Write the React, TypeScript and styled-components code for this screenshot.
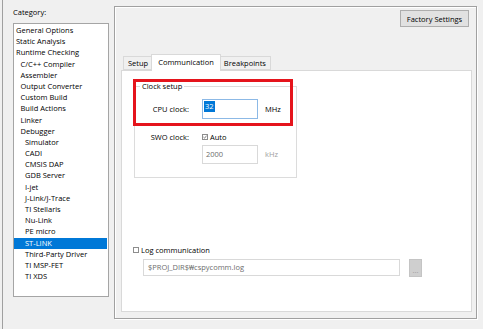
import styled, { createGlobalStyle } from 'styled-components';

const FONT = `'Open Sans', 'Noto Sans', 'Liberation Sans', sans-serif`;

const GlobalStyle = createGlobalStyle`
  html, body {
    margin: 0;
    padding: 0;
    background: #f0f0f0;
  }
`;

const Window = styled.div`
  display: flex;
  width: 483px;
  height: 329px;
  overflow: hidden;
  background: #f0f0f0;
  font-family: ${FONT};
  font-size: 7.5px;
  color: #000;
`;

const Sidebar = styled.div`
  box-sizing: border-box;
  width: 112px;
  margin-left: 2px;
  padding: 6px 0 0 10px;
  border-left: 1px solid #a0a0a0;
`;

const CategoryLabel = styled.div`
  height: 12px;
  line-height: 12px;
  margin-bottom: 5px;
`;

const CategoryList = styled.ul`
  box-sizing: border-box;
  width: 96px;
  height: 274px;
  margin: 0;
  padding: 1px 1px 0 0;
  list-style: none;
  background: #fff;
  border: 1px solid #a5a5a5;
`;

const CategoryItem = styled.li<{ $level: number; $selected?: boolean }>`
  height: 11.2px;
  line-height: 11.2px;
  padding-left: ${({ $level }) => 2 + $level * 4.5}px;
  white-space: nowrap;
  background: ${({ $selected }) => ($selected ? '#0078d7' : 'transparent')};
  color: ${({ $selected }) => ($selected ? '#fff' : '#000')};
`;

const SettingsPanel = styled.div`
  box-sizing: border-box;
  display: flex;
  flex-direction: column;
  width: 363px;
  height: 313px;
  margin-top: 6px;
  padding: 3px 4px 6px 6px;
  border: 1px solid #a0a0a0;
  box-shadow: inset 1px 1px 0 #fff, 1px 1px 0 #fff;
`;

const FactoryButton = styled.button`
  align-self: flex-end;
  box-sizing: border-box;
  width: 69px;
  height: 17px;
  margin: 0 3px 0 0;
  padding: 0;
  font-family: ${FONT};
  font-size: 7.5px;
  color: #000;
  background: #e1e1e1;
  border: 1px solid #adadad;
`;

const TabStrip = styled.div`
  display: flex;
  align-items: flex-end;
  height: 16px;
  margin-top: 27px;
  padding-left: 2px;
`;

const Tab = styled.div<{ $active?: boolean }>`
  position: relative;
  box-sizing: border-box;
  height: ${({ $active }) => ($active ? 17 : 14)}px;
  margin: ${({ $active }) => ($active ? '0 -2px -1px' : '0')};
  padding: ${({ $active }) => ($active ? '0 6px' : '0 4px')};
  line-height: ${({ $active }) => ($active ? 14 : 13)}px;
  background: ${({ $active }) => ($active ? '#fff' : '#f0f0f0')};
  border: 1px solid #d9d9d9;
  border-bottom: ${({ $active }) => ($active ? 'none' : '1px solid #d9d9d9')};
  z-index: ${({ $active }) => ($active ? 1 : 0)};
  white-space: nowrap;
`;

const TabBody = styled.div`
  position: relative;
  flex: 1;
  background: #fff;
  border: 1px solid #d9d9d9;
`;

const Annotation = styled.div`
  position: absolute;
  left: 11px;
  top: 8px;
  width: 160px;
  height: 47px;
  box-sizing: border-box;
  border: 3px solid #e5141c;
  pointer-events: none;
`;

const GroupBox = styled.fieldset`
  box-sizing: border-box;
  width: 163px;
  height: 98px;
  margin: 9px 0 0 12px;
  padding: 0;
  border: 1px solid #dcdcdc;
`;

const GroupLegend = styled.legend`
  margin-left: 5px;
  padding: 0 2px;
  line-height: 12px;
`;

const ClockGrid = styled.div`
  display: grid;
  grid-template-columns: 54px 56px auto;
  grid-template-rows: 20px 24px 21px;
  column-gap: 13px;
  align-items: end;
  padding-top: 7px;
`;

const FieldLabel = styled.span<{ $center?: boolean }>`
  justify-self: end;
  align-self: ${({ $center }) => ($center ? 'center' : 'end')};
  line-height: 12px;
  white-space: nowrap;
`;

const TextBox = styled.div<{ $focused?: boolean; $disabled?: boolean }>`
  box-sizing: border-box;
  height: ${({ $focused }) => ($focused ? 20 : 19)}px;
  padding: ${({ $focused }) => ($focused ? '1px 1px 0 3px' : '0 1px 0 3px')};
  background: #fff;
  border: 1px solid ${({ $focused }) => ($focused ? '#8cb9e6' : '#d9d9d9')};
  color: ${({ $disabled }) => ($disabled ? '#6d6d6d' : '#000')};
  line-height: ${({ $focused }) => ($focused ? 11 : 17)}px;
  white-space: nowrap;
  overflow: hidden;
`;

const Selection = styled.span`
  display: inline-block;
  margin-left: -2px;
  padding: 0 1px;
  background: #0078d7;
  color: #fff;
`;

const Unit = styled.span<{ $disabled?: boolean }>`
  margin-left: -6px;
  align-self: center;
  color: ${({ $disabled }) => ($disabled ? '#a0a0a0' : '#000')};
`;

const CheckRow = styled.label`
  display: flex;
  align-items: center;
  gap: 2px;
  height: 12px;
  white-space: nowrap;
  color: #000;
`;

const CheckMark = styled.span`
  display: inline-flex;
  align-items: center;
  justify-content: center;
  box-sizing: border-box;
  width: 6px;
  height: 6px;
  border: 1px solid #8d8d8d;
  background: #fff;
`;

const LogSection = styled.div`
  display: flex;
  flex-direction: column;
  margin: 66px 0 0 11px;
`;

const PathRow = styled.div`
  display: flex;
  gap: 9px;
  height: 18px;
  margin: 3px 0 0 10px;
`;

const PathBox = styled.div`
  box-sizing: border-box;
  width: 257px;
  height: 17px;
  padding-left: 4px;
  line-height: 15px;
  color: #6d6d6d;
  background: #fff;
  border: 1px solid #d9d9d9;
  white-space: nowrap;
`;

const BrowseButton = styled.div`
  box-sizing: border-box;
  width: 13px;
  height: 18px;
  padding-top: 5px;
  text-align: center;
  line-height: 10px;
  color: #9a9a9a;
  background: #cfcfcf;
  border: 1px solid #c4c4c4;
`;

const categories: Array<[string, number]> = [
  ['General Options', 0],
  ['Static Analysis', 0],
  ['Runtime Checking', 0],
  ['C/C++ Compiler', 1],
  ['Assembler', 1],
  ['Output Converter', 1],
  ['Custom Build', 1],
  ['Build Actions', 1],
  ['Linker', 1],
  ['Debugger', 1],
  ['Simulator', 2],
  ['CADI', 2],
  ['CMSIS DAP', 2],
  ['GDB Server', 2],
  ['I-jet', 2],
  ['J-Link/J-Trace', 2],
  ['TI Stellaris', 2],
  ['Nu-Link', 2],
  ['PE micro', 2],
  ['ST-LINK', 2],
  ['Third-Party Driver', 2],
  ['TI MSP-FET', 2],
  ['TI XDS', 2],
];

function Check({ checked }: { checked?: boolean }) {
  return (
    <CheckMark>
      {checked && (
        <svg width="4" height="4" viewBox="0 0 4 4">
          <path d="M0.4 2 L1.6 3.2 L3.6 0.6" fill="none" stroke="#666" strokeWidth="0.8" />
        </svg>
      )}
    </CheckMark>
  );
}

export default function App() {
  return (
    <>
      <GlobalStyle />
      <Window>
        <Sidebar>
          <CategoryLabel>Category:</CategoryLabel>
          <CategoryList>
            {categories.map(([name, level]) => (
              <CategoryItem key={name} $level={level} $selected={name === 'ST-LINK'}>
                {name}
              </CategoryItem>
            ))}
          </CategoryList>
        </Sidebar>

        <SettingsPanel>
          <FactoryButton>Factory Settings</FactoryButton>
          <TabStrip>
            <Tab>Setup</Tab>
            <Tab $active>Communication</Tab>
            <Tab>Breakpoints</Tab>
          </TabStrip>
          <TabBody>
            <GroupBox>
              <GroupLegend>Clock setup</GroupLegend>
              <ClockGrid>
                <FieldLabel $center>CPU clock:</FieldLabel>
                <TextBox $focused>
                  <Selection>32</Selection>
                </TextBox>
                <Unit>MHz</Unit>

                <FieldLabel>SWO clock:</FieldLabel>
                <CheckRow>
                  <Check checked />
                  Auto
                </CheckRow>
                <span />

                <span />
                <TextBox $disabled>2000</TextBox>
                <Unit $disabled>kHz</Unit>
              </ClockGrid>
            </GroupBox>

            <LogSection>
              <CheckRow>
                <Check />
                Log communication
              </CheckRow>
              <PathRow>
                <PathBox>$PROJ_DIR$₩cspycomm.log</PathBox>
                <BrowseButton>...</BrowseButton>
              </PathRow>
            </LogSection>

            <Annotation />
          </TabBody>
        </SettingsPanel>
      </Window>
    </>
  );
}
